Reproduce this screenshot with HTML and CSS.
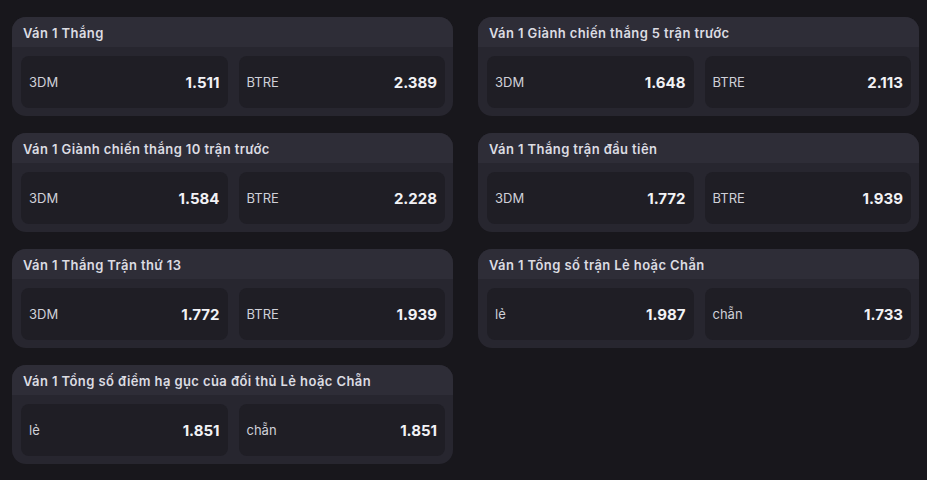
FILE: index.html
```
<!DOCTYPE html>
<html lang="vi">
<head>
    <meta charset="UTF-8">
    <title>Kèo ván 1</title>
    <link rel="stylesheet" href="styles.css">
</head>
<body>
<div class="markets">
    <div class="market">
        <div class="market__title">Ván 1 Thắng</div>
        <div class="market__odds">
            <div class="odd"><span class="odd__name">3DM</span><span class="odd__value">1.511</span></div>
            <div class="odd"><span class="odd__name">BTRE</span><span class="odd__value">2.389</span></div>
        </div>
    </div>
    <div class="market">
        <div class="market__title">Ván 1 Giành chiến thắng 5 trận trước</div>
        <div class="market__odds">
            <div class="odd"><span class="odd__name">3DM</span><span class="odd__value">1.648</span></div>
            <div class="odd"><span class="odd__name">BTRE</span><span class="odd__value">2.113</span></div>
        </div>
    </div>
    <div class="market">
        <div class="market__title">Ván 1 Giành chiến thắng 10 trận trước</div>
        <div class="market__odds">
            <div class="odd"><span class="odd__name">3DM</span><span class="odd__value">1.584</span></div>
            <div class="odd"><span class="odd__name">BTRE</span><span class="odd__value">2.228</span></div>
        </div>
    </div>
    <div class="market">
        <div class="market__title">Ván 1 Thắng trận đầu tiên</div>
        <div class="market__odds">
            <div class="odd"><span class="odd__name">3DM</span><span class="odd__value">1.772</span></div>
            <div class="odd"><span class="odd__name">BTRE</span><span class="odd__value">1.939</span></div>
        </div>
    </div>
    <div class="market">
        <div class="market__title">Ván 1 Thắng Trận thứ 13</div>
        <div class="market__odds">
            <div class="odd"><span class="odd__name">3DM</span><span class="odd__value">1.772</span></div>
            <div class="odd"><span class="odd__name">BTRE</span><span class="odd__value">1.939</span></div>
        </div>
    </div>
    <div class="market">
        <div class="market__title">Ván 1 Tổng số trận Lẻ hoặc Chẵn</div>
        <div class="market__odds">
            <div class="odd"><span class="odd__name">lẻ</span><span class="odd__value">1.987</span></div>
            <div class="odd"><span class="odd__name">chẵn</span><span class="odd__value">1.733</span></div>
        </div>
    </div>
    <div class="market">
        <div class="market__title">Ván 1 Tổng số điểm hạ gục của đối thủ Lẻ hoặc Chẵn</div>
        <div class="market__odds">
            <div class="odd"><span class="odd__name">lẻ</span><span class="odd__value">1.851</span></div>
            <div class="odd"><span class="odd__name">chẵn</span><span class="odd__value">1.851</span></div>
        </div>
    </div>
</div>
</body>
</html>
```
FILE: styles.css
```
*{
    box-sizing: border-box;
    margin:0;
    padding:0;
}
body{
    background-color: #18171c;
    font-family: "Inter", "Noto Sans", sans-serif;
    color: #d9d9df;
    padding: 17px 8px 0 12px;
}
.markets{
    display: grid;
    grid-template-columns: 441px 441px;
    column-gap: 25px;
    row-gap: 17px;
}
.market{
    background-color: #27262f;
    border-radius: 14px;
    overflow: hidden;
    height: 99px;
}
.market__title{
    background-color: #2e2d37;
    height: 30px;
    padding: 8px 0 0 11px;
    font-size: 13px;
    font-weight: 600;
    letter-spacing: 0.4px;
    color: #dcdce2;
}
.market__odds{
    display: flex;
    gap: 11px;
    padding: 9px 8px 0 9px;
}
.odd{
    flex: 1;
    height: 52px;
    background-color: #1f1e25;
    border-radius: 8px;
    display: flex;
    align-items: center;
    justify-content: space-between;
    padding: 0 8px 0 8px;
}
.odd__name{
    font-size: 13px;
    color: #cfd0d8;
}
.odd__value{
    font-size: 15px;
    font-weight: 700;
    color: #f2f2f5;
}
```
